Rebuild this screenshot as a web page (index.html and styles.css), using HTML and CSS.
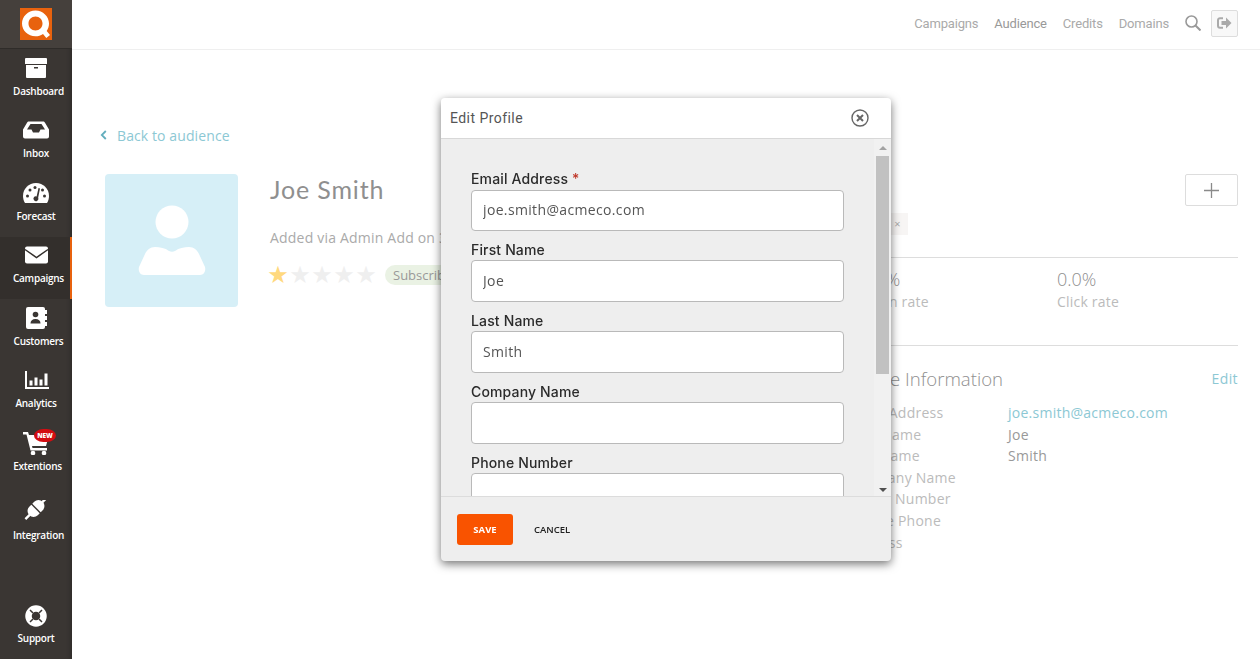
FILE: index.html
```html
<!DOCTYPE html>
<html lang="en">
<head>
<meta charset="utf-8">
<title>Edit Profile</title>
<link rel="stylesheet" href="styles.css">
</head>
<body>
<aside class="sidebar">
  <div class="logo-bar">
    <svg class="logo" width="32" height="32" viewBox="0 0 32 32"><rect width="32" height="32" fill="#e8620e"/><path fill="#fff" fill-rule="evenodd" d="M15.500 2.500C23 2.500 29 8.500 29 15.500c0 2.800-.8 5.300-2.300 7.400l3.300 4.100-3.700 3-3.300-4c-2.200 1.500-4.700 2.300-7.500 2.300C8 28.300 2 22.500 2 15.500S8 2.500 15.500 2.500zM15.500 8.500c-4 0-7 3.100-7 7s3 7 7 7 7-3.100 7-7-3-7-7-7z"/></svg>
  </div>
  <nav class="side-nav">
    <a class="side-item wide">
      <svg class="side-icon" viewBox="0 0 28 24"><path class="w" d="M4 2h20a1 1 0 0 1 1 1v5H3V3a1 1 0 0 1 1-1z"/><path class="w" fill-rule="evenodd" d="M4 9h20v12a1 1 0 0 1-1 1H5a1 1 0 0 1-1-1zM12 11v1.500h4V11z"/></svg>
      <span>Dashboard</span>
    </a>
    <a class="side-item">
      <svg class="side-icon" viewBox="0 1.500 28 24"><path class="w" fill-rule="evenodd" d="M7 4h14c1 0 1.500.5 2 1.200L27 12v7a2 2 0 0 1-2 2H3a2 2 0 0 1-2-2v-7l4-6.800C5.500 4.500 6 4 7 4zM8.500 6.500 5 12h4.500l1.500 3h6l1.500-3H23l-3.500-5.500z"/></svg>
      <span>Inbox</span>
    </a>
    <a class="side-item">
      <svg class="side-icon" viewBox="0 0 28 24"><path class="w" d="M14 2C6.800 2 1 7.600 1 15c0 2.500.7 5 2 7h22c1.300-2 2-4.500 2-7C27 7.600 21.200 2 14 2z"/><g class="d"><circle cx="5.500" cy="15" r="1.500"/><circle cx="8" cy="9" r="1.500"/><circle cx="13" cy="6.500" r="1.500"/><circle cx="20.500" cy="9" r="1.500"/><circle cx="22.500" cy="15" r="1.500"/><path d="M16.500 7l1.500.5-1.800 9a2.500 2.500 0 1 1-4.200-.5 2.500 2.500 0 0 1 2.600-.4z"/></g></svg>
      <span>Forecast</span>
    </a>
    <a class="side-item wide active">
      <svg class="side-icon" viewBox="0 0 28 24"><rect class="w" x="3" y="2.500" width="23" height="17" rx="2"/><path d="M3 5.500l11.500 8 11.500-8" fill="none" stroke="#332f2c" stroke-width="1.500"/></svg>
      <span>Campaigns</span>
    </a>
    <a class="side-item wide">
      <svg class="side-icon" viewBox="0 0 28 24"><rect class="w" x="4" y="1" width="19" height="22" rx="2"/><path class="w" d="M23 4h2v4h-2zM23 10h2v4h-2zM23 16h2v4h-2z"/><g class="d"><circle cx="13.500" cy="8.500" r="2.800"/><path d="M8.500 17.500c0-3 2-4.500 5-4.500s5 1.500 5 4.500z"/></g></svg>
      <span>Customers</span>
    </a>
    <a class="side-item">
      <svg class="side-icon" viewBox="0 1.500 28 24"><path class="w" d="M3 3.500h2v16h22v2H3z"/><path class="w" d="M7.500 13h3v5h-3zM12.500 10h3v8h-3zM17.500 12h3v6h-3zM22.500 6h3v12h-3z"/></svg>
      <span>Analytics</span>
    </a>
    <a class="side-item mid">
      <span class="cart">
        <svg class="side-icon" viewBox="0 0 28 24"><path class="w" d="M1 1h5l1 3h20l-3 11H10l.5 2H25v2.500H8.500L4.500 3.500H1z"/><circle class="w" cx="11" cy="22" r="2.300"/><circle class="w" cx="22" cy="22" r="2.300"/></svg>
        <b class="new-badge">NEW</b>
      </span>
      <span>Extentions</span>
    </a>
    <a class="side-item wide integration">
      <svg class="side-icon" viewBox="0 3.500 28 24"><g transform="rotate(-45 14 12)"><rect class="w" x="4.500" y="6" width="19" height="12" rx="6"/><path d="M14 5v14" stroke="#3a3633" stroke-width="1.400"/><path d="M-1 12h6M23 12h6" stroke="#fff" stroke-width="2.400"/></g></svg>
      <span>Integration</span>
    </a>
    <a class="side-item support">
      <svg class="side-icon" viewBox="0 0 28 24"><circle cx="14" cy="12" r="7.500" fill="none" stroke="#fff" stroke-width="6.500"/><path d="M8 6l3 3M20 6l-3 3M8 18l3-3M20 18l-3-3" stroke="#3a3633" stroke-width="1.500"/></svg>
      <span>Support</span>
    </a>
  </nav>
</aside>

<div class="main">
  <header class="topbar">
    <a class="top-link">Campaigns</a>
    <a class="top-link current">Audience</a>
    <a class="top-link">Credits</a>
    <a class="top-link">Domains</a>
    <svg class="search" width="16" height="16" viewBox="0 0 16 16"><circle cx="6.500" cy="6.500" r="5.500" fill="none" stroke="#999" stroke-width="1.600"/><path d="M10.500 10.500L15.500 15.500" stroke="#999" stroke-width="2"/></svg>
    <button class="logout"><svg width="15" height="12" viewBox="0 0 15 12"><path d="M6 1.200H3a2 2 0 0 0-2 2v5.600a2 2 0 0 0 2 2h3" fill="none" stroke="#aaa" stroke-width="2"/><path fill="#aaa" d="M9 .5l5.500 5.500L9 11.500V8H4.500V4H9z"/></svg></button>
  </header>

  <main class="content">
    <a class="back"><svg width="7" height="10" viewBox="0 0 7 10"><path d="M5.800 1L1.800 5l4 4" fill="none" stroke="#63aebd" stroke-width="1.800"/></svg><span>Back to audience</span></a>
    <section class="profile">
      <div class="avatar">
        <svg width="68" height="71" viewBox="0 0 68 71"><circle cx="34" cy="17" r="16.500" fill="#fff"/><path fill="#fff" d="M17 42c5 0 10 1 14 4 2 1 4 1 6 0 4-3 9-4 14-4 5 0 8 3 10 7l6 13c1 4-1 8-5 8H6c-4 0-6-4-5-8l6-13c2-4 5-7 10-7z"/></svg>
      </div>
      <div class="identity">
        <h1 class="name">Joe Smith</h1>
        <p class="added">Added via Admin Add on 3</p>
        <div class="rating">
          <span class="star on">★</span><span class="star">★</span><span class="star">★</span><span class="star">★</span><span class="star">★</span>
          <span class="pill">Subscribed</span>
        </div>
      </div>
      <div class="details">
        <div class="details-top">
          <button class="plus"><svg width="15" height="15" viewBox="0 0 15 15"><path d="M7.500 0v15M0 7.500h15" stroke="#8a8a8a" stroke-width="1.300"/></svg></button>
          <span class="tag">Customer <i>×</i></span>
        </div>
        <div class="stats">
          <div class="stat"><strong>0.0%</strong><span>Open rate</span></div>
          <div class="stat"><strong>0.0%</strong><span>Click rate</span></div>
        </div>
        <div class="info">
          <div class="info-head"><h2>Profile Information</h2><a>Edit</a></div>
          <dl class="info-list">
            <dt>Email Address</dt><dd class="link">joe.smith@acmeco.com</dd>
            <dt>First Name</dt><dd>Joe</dd>
            <dt>Last Name</dt><dd>Smith</dd>
            <dt>Company Name</dt><dd></dd>
            <dt>Phone Number</dt><dd></dd>
            <dt>Mobile Phone</dt><dd></dd>
            <dt>Address</dt><dd></dd>
          </dl>
        </div>
      </div>
    </section>
  </main>
</div>

<div class="modal">
  <div class="modal-head">
    <span>Edit Profile</span>
    <svg width="18" height="18" viewBox="0 0 18 18"><circle cx="9" cy="9" r="8" fill="none" stroke="#666" stroke-width="1.400"/><path d="M6 6l6 6M12 6l-6 6" stroke="#666" stroke-width="2"/></svg>
  </div>
  <div class="modal-body">
    <form class="form">
      <label class="field"><span>Email Address <em>*</em></span><input type="text" value="joe.smith@acmeco.com"></label>
      <label class="field"><span>First Name</span><input type="text" value="Joe"></label>
      <label class="field"><span>Last Name</span><input type="text" value="Smith"></label>
      <label class="field"><span>Company Name</span><input type="text"></label>
      <label class="field"><span>Phone Number</span><input type="text"></label>
    </form>
    <div class="scrollbar">
      <i class="arrow up"></i>
      <div class="track"><div class="thumb"></div></div>
      <i class="arrow down"></i>
    </div>
  </div>
  <div class="modal-foot">
    <button class="save">SAVE</button>
    <button class="cancel">CANCEL</button>
  </div>
</div>
</body>
</html>
```
FILE: styles.css
```css
* { box-sizing: border-box; }
html, body { height: 100%; }
body {
  margin: 0;
  display: flex;
  overflow: hidden;
  background: #fff;
  font-family: "Open Sans", sans-serif;
  color: #999;
}
a { text-decoration: none; }

/* Sidebar */
.sidebar {
  width: 72px;
  flex: none;
  display: flex;
  flex-direction: column;
  background: #3a3633;
  box-shadow: inset -5px 0 5px -4px rgba(0,0,0,.25);
}
.logo-bar {
  height: 49px;
  flex: none;
  display: flex;
  justify-content: center;
  align-items: flex-start;
  padding-top: 8px;
  background: #45403c;
  border-bottom: 1px solid #2f2c29;
}
.side-nav { flex: 1; display: flex; flex-direction: column; }
.side-item {
  height: 62.5px;
  flex: none;
  display: flex;
  flex-direction: column;
  align-items: center;
  padding: 7px 0 0;
  color: #fff;
  font-size: 10px;
  font-weight: 600;
  letter-spacing: -.25px;
  line-height: 14px;
}
.side-item > span:last-child { margin-top: 3.5px; }
.side-item.wide > span:last-child { margin-left: 5px; }
.side-item.mid > span:last-child { margin-left: 3px; }
.side-icon { width: 28px; height: 24px; display: block; }
.w { fill: #fff; }
.d { fill: #3a3633; }
.active { background: #332f2c; box-shadow: inset -2px 0 0 #e8620e; }
.cart { position: relative; display: block; height: 24px; }
.new-badge {
  position: absolute;
  left: 12px;
  top: -2px;
  width: 22px;
  height: 13px;
  border-radius: 10px / 7px;
  background: #d30d12;
  color: #fff;
  font-size: 6.5px;
  line-height: 13px;
  font-weight: 800;
  letter-spacing: 0;
  text-align: center;
}
.integration { margin-top: 6.500px; }
.support { margin-top: auto; }

/* Top bar */
.main { flex: 1; min-width: 0; display: flex; flex-direction: column; }
.topbar {
  height: 50px;
  flex: none;
  display: flex;
  align-items: center;
  justify-content: flex-end;
  gap: 16px;
  padding: 0 22px 3px 0;
  border-bottom: 1px solid #efefef;
  font-family: Roboto, sans-serif;
  font-size: 13px;
  letter-spacing: -.17px;
}
.top-link { color: #aaa; }
.top-link.current { color: #999; }
.logout {
  width: 27px;
  height: 27px;
  margin-left: -6px;
  padding: 0;
  display: flex;
  align-items: center;
  justify-content: center;
  background: #f8f8f8;
  border: 1px solid #ddd;
  border-radius: 2px;
}

/* Content */
.content { flex: 1; padding: 75px 22px 0 28px; }
.back {
  display: flex;
  align-items: center;
  gap: 10px;
  height: 20px;
  font-size: 14px;
  letter-spacing: .1px;
  color: #8cc8d4;
}
.profile { display: flex; margin-top: 29px; padding-left: 5px; }
.avatar {
  width: 133px;
  height: 133px;
  flex: none;
  display: flex;
  align-items: center;
  justify-content: center;
  background: #d6eff7;
  border-radius: 4px;
}
.identity { margin-left: 32px; }
.name {
  margin: -1px 0 0;
  font-family: Lato, sans-serif;
  font-size: 25px;
  line-height: 32px;
  font-weight: 400;
  letter-spacing: .85px;
  color: #8f8f8f;
}
.added { margin: 23px 0 0; font-size: 14px; line-height: 20px; letter-spacing: .2px; color: #aaa; white-space: nowrap; }
.rating { display: flex; align-items: center; height: 22px; margin: 16px 0 0 -3px; }
.star { width: 22px; font-size: 24px; line-height: 22px; color: #efefef; text-align: center; font-family: "DejaVu Sans", sans-serif; }
.star.on { color: #ffd97e; }
.pill { margin-left: 8px; padding: 0 8px; height: 20px; line-height: 20px; border-radius: 10px; background: #eaf2e4; font-size: 13px; color: #999; }
.details { margin-left: auto; width: 408px; flex: none; }
.details-top { height: 84px; display: flex; flex-direction: column; border-bottom: 1px solid #ddd; }
.plus {
  width: 53px;
  height: 32px;
  flex: none;
  align-self: flex-end;
  padding: 0;
  display: flex;
  align-items: center;
  justify-content: center;
  background: #fff;
  border: 1px solid #ddd;
  border-radius: 2px;
}
.tag {
  align-self: flex-start;
  width: 78px;
  height: 22px;
  margin-top: 7px;
  padding: 0 0 0 6px;
  background: #f7f5f4;
  font-size: 11px;
  line-height: 22px;
  white-space: nowrap;
}
.tag i { font-style: normal; margin-left: 5px; color: #aaa; }
.stats { display: grid; grid-template-columns: 196px 1fr; padding: 8px 0 0 31px; height: 88px; border-bottom: 1px solid #ddd; }
.stat { display: flex; flex-direction: column; }
.stat strong { font-size: 18px; font-weight: 300; line-height: 26px; color: #8f8f8f; }
.stat span { font-size: 14px; line-height: 18px; margin-top: 1px; color: #bbb; letter-spacing: .2px; }
.info-head { display: flex; justify-content: space-between; align-items: center; margin-top: 20px; height: 28px; }
.info-head h2 { margin: 0 0 4px 17px; font-size: 18.600px; font-weight: 300; color: #8f8f8f; }
.info-head a { margin-bottom: 3px; font-size: 14px; letter-spacing: .4px; color: #8cc8d4; }
.info-list { display: grid; grid-template-columns: 160px 1fr; margin: 8px 0 0; padding-left: 18px; font-size: 14px; line-height: 21.600px; letter-spacing: .25px; }
.info-list dt { color: #bbb; }
.info-list dd { margin: 0; color: #999; }
.info-list dd.link { color: #8cc8d4; }

/* Modal */
.modal {
  position: fixed;
  left: 441px;
  top: 98px;
  width: 450px;
  height: 463px;
  display: flex;
  flex-direction: column;
  background: #eee;
  border-radius: 4px;
  box-shadow: 0 3px 10px rgba(0,0,0,.55);
  overflow: hidden;
}
.modal-head {
  height: 41px;
  flex: none;
  display: flex;
  align-items: center;
  justify-content: space-between;
  padding: 0 22px 1px 9px;
  background: #fff;
  border-bottom: 1px solid #d8d8d8;
  font-family: Roboto, sans-serif;
  font-size: 14px;
  letter-spacing: .45px;
  color: #555;
}
.modal-body { flex: 1; min-height: 0; display: flex; }
.form { flex: 1; overflow: hidden; padding: 30px 16px 0 30px; }
.field { display: block; margin-bottom: 9px; }
.field span {
  display: block;
  height: 20px;
  font-family: Inter, sans-serif;
  font-size: 14px;
  font-weight: 500;
  letter-spacing: .15px;
  line-height: 20px;
  color: #2b2b2b;
}
.field em { font-style: normal; color: #c0392b; }
.field input {
  display: block;
  width: 373px;
  height: 42px;
  padding: 0 11px 2px;
  border: 1px solid #b9b9b9;
  border-radius: 4px;
  background: #fff;
  font-family: "Open Sans", sans-serif;
  font-size: 14px;
  letter-spacing: .35px;
  color: #555;
  outline: 0;
}
.field:first-child input { margin-top: 1px; height: 41px; }
.scrollbar { width: 17px; flex: none; display: flex; flex-direction: column; align-items: center; background: #f1f1f1; }
.arrow { width: 0; height: 0; flex: none; border: 4px solid transparent; }
.arrow.up { margin: 7px 0 6px; border-top: 0; border-bottom: 4px solid #a3a3a3; }
.arrow.down { margin: 7px 0 4px; border-bottom: 0; border-top: 4px solid #505050; }
.track { flex: 1; width: 100%; padding: 0 2px; }
.thumb { width: 13px; height: 218px; background: #c1c1c1; }
.modal-foot {
  height: 65px;
  flex: none;
  display: flex;
  align-items: center;
  gap: 21px;
  padding: 0 16px;
  border-top: 1px solid #dcdcdc;
}
.save, .cancel { font-family: "Open Sans", sans-serif; font-size: 9.500px; font-weight: 600; border: 0; padding: 0; }
.save { width: 56px; height: 31px; background: #f95300; color: #fff; border-radius: 3px; font-weight: 700; }
.cancel { background: none; color: #222; }
```
